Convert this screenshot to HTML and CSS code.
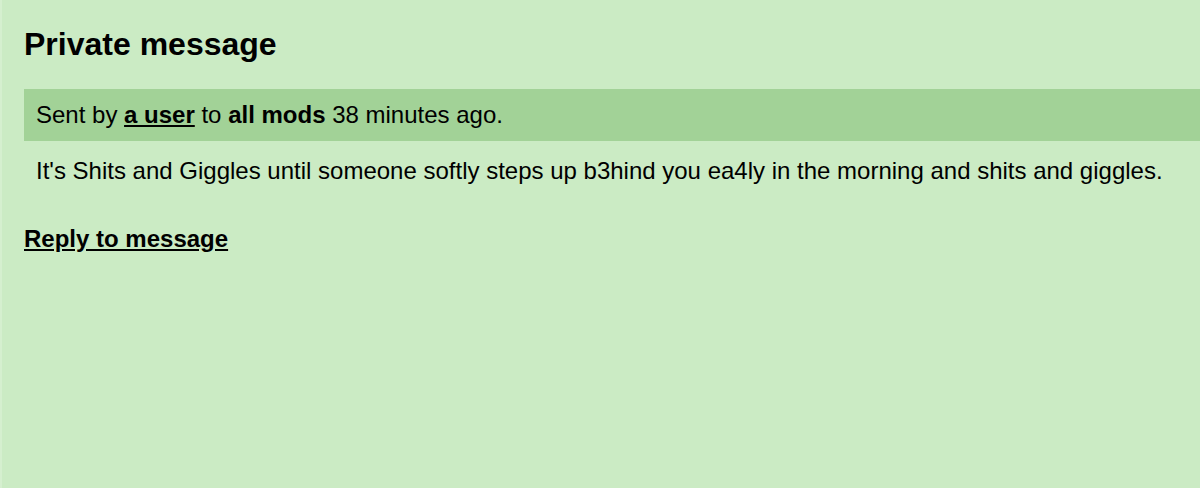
FILE: index.html
```html
<!DOCTYPE html>
<html lang="en">
<head>
<meta charset="utf-8">
<title>Private message</title>
<link rel="stylesheet" href="styles.css">
</head>
<body>
<main class="page">
  <h1 class="title">Private message</h1>
  <div class="meta">Sent by <a class="user" href="#">a user</a> to <strong>all mods</strong> 38 minutes ago.</div>
  <p class="body">It's Shits and Giggles until someone softly steps up b3hind you ea4ly in the morning and shits and giggles.</p>
  <a class="reply" href="#">Reply to message</a>
</main>
</body>
</html>
```

FILE: styles.css
```css
html, body {
  margin: 0;
  padding: 0;
  height: 100%;
}
body {
  background: #cbebc4;
  border-left: 2px solid #d5efcf;
  box-sizing: border-box;
  font-family: "Liberation Sans", Arial, sans-serif;
  font-size: 24px;
  color: #000;
}
.page {
  padding: 24px 0 24px 22px;
  display: flex;
  flex-direction: column;
  align-items: flex-start;
}
.title {
  margin: 0 0 25px;
  font-size: 32px;
  line-height: 40px;
  font-weight: bold;
}
.meta {
  align-self: stretch;
  background: #a2d297;
  padding: 12px;
}
.meta a, .meta strong {
  font-weight: bold;
  color: #000;
}
.body {
  margin: 0 0 24px;
  padding: 16px 12px;
}
.reply {
  color: #000;
  font-weight: bold;
}
```
